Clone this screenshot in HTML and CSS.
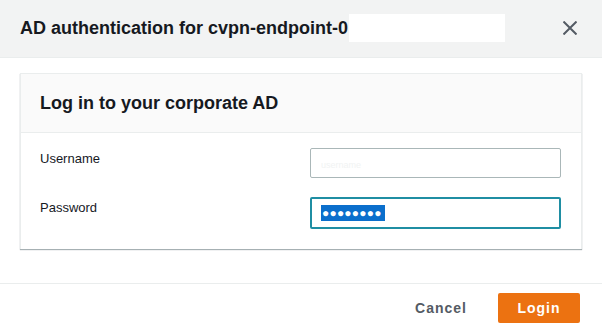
FILE: index.html
```html
<!DOCTYPE html>
<html lang="en">
<head>
    <meta charset="UTF-8">
    <title>AD authentication</title>
    <link rel="stylesheet" href="styles.css">
</head>
<body>
    <div class="modal">
        <div class="modal-header">
            <h1 class="modal-title">AD authentication for cvpn-endpoint-0<span class="redact"></span></h1>
            <button class="close" aria-label="Close">
                <svg width="14" height="14" viewBox="0 0 14 14">
                    <path d="M0.5 0.5 L13.5 13.5 M13.5 0.5 L0.5 13.5" stroke="#545b64" stroke-width="2" fill="none"/>
                </svg>
            </button>
        </div>

        <div class="modal-body">
            <div class="panel">
                <div class="panel-header">
                    <h2>Log in to your corporate AD</h2>
                </div>
                <div class="panel-content">
                    <label for="username">Username</label>
                    <input type="text" id="username" class="field" placeholder="username">
                    <label for="password">Password</label>
                    <div class="field field-focus">
                        <span class="dots">&#9679;&#9679;&#9679;&#9679;&#9679;&#9679;&#9679;&#9679;</span>
                    </div>
                </div>
            </div>
        </div>

        <div class="modal-footer">
            <button class="btn-link">Cancel</button>
            <button class="btn-primary">Login</button>
        </div>
    </div>
</body>
</html>
```

FILE: styles.css
```css
body {
    margin: 0;
    background: #ffffff;
    font-family: "Liberation Sans", Arial, sans-serif;
    color: #16191f;
}
.modal {
    width: 602px;
    height: 333px;
    display: flex;
    flex-direction: column;
}
.modal-header {
    height: 58px;
    background: #f2f3f3;
    border-bottom: 1px solid #eaeded;
    display: flex;
    align-items: center;
    justify-content: space-between;
    padding: 0 25px 1px 20px;
    box-sizing: border-box;
}
.modal-title {
    margin: 0;
    font-size: 18px;
    font-weight: bold;
    display: flex;
    align-items: center;
}
.redact {
    display: inline-block;
    width: 156px;
    height: 28px;
    background: #ffffff;
    margin-left: 1px;
}
.close {
    border: none;
    background: none;
    padding: 0;
    width: 14px;
    height: 14px;
    display: flex;
    cursor: pointer;
}
.modal-body {
    padding: 15px 20px 34px;
}
.panel {
    border: 1px solid #eaeded;
    border-bottom: none;
    box-shadow: 0 1px 1px 0 rgba(0, 28, 36, 0.35);
    background: #ffffff;
}
.panel-header {
    height: 58px;
    background: #fafafa;
    border-bottom: 1px solid #eaeded;
    display: flex;
    align-items: center;
    padding: 0 19px;
}
.panel-header h2 {
    margin: 0;
    font-size: 18px;
    font-weight: bold;
}
.panel-content {
    display: grid;
    grid-template-columns: 1fr 251px;
    row-gap: 19px;
    align-items: center;
    padding: 15px 20px 20px 19px;
}
.panel-content label {
    font-size: 13px;
    color: #16191f;
    align-self: start;
    padding-top: 3px;
}
.field {
    box-sizing: border-box;
    height: 30px;
    width: 251px;
    border: 1px solid #aab7b8;
    border-radius: 2px;
    padding: 0 10px;
    font-family: inherit;
    font-size: 13px;
    outline: none;
}
.field::placeholder {
    color: #f1f3f3;
    font-size: 9px;
}
.field-focus {
    height: 32px;
    border: 2px solid #1f8ea3;
    display: flex;
    align-items: center;
    padding: 0 9px;
}
.dots {
    display: inline-block;
    width: 64px;
    height: 16px;
    background: #0b6fcc;
    color: #ffffff;
    font-size: 12px;
    letter-spacing: 0.2px;
    line-height: 16px;
    padding-left: 1px;
    box-sizing: border-box;
    overflow: hidden;
    white-space: nowrap;
}
.modal-footer {
    border-top: 1px solid #eaeded;
    flex: 1;
    display: flex;
    justify-content: flex-end;
    align-items: flex-start;
    gap: 31px;
    padding: 9px 22px 0 20px;
}
.btn-link {
    border: none;
    background: none;
    font-family: inherit;
    font-size: 14px;
    font-weight: bold;
    letter-spacing: 1px;
    color: #545b64;
    height: 30px;
    padding: 0;
    cursor: pointer;
}
.btn-primary {
    border: none;
    background: #ec7211;
    color: #ffffff;
    font-family: inherit;
    font-size: 14px;
    font-weight: bold;
    letter-spacing: 1px;
    width: 82px;
    height: 30px;
    border-radius: 2px;
    cursor: pointer;
}
```
